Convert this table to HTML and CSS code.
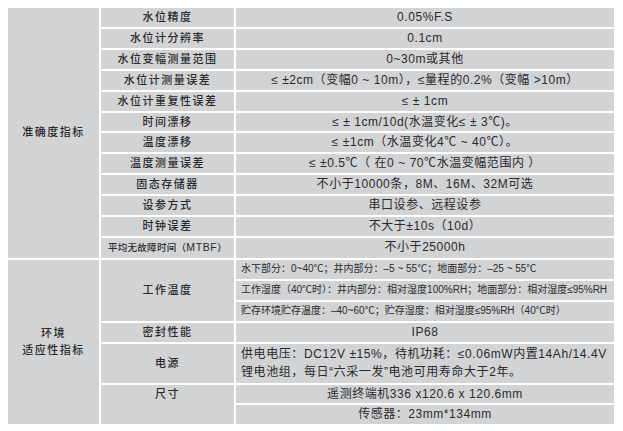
FILE: index.html
```html
<!DOCTYPE html>
<html lang="zh">
<head>
<meta charset="utf-8">
<title>技术参数</title>
<link rel="stylesheet" href="styles.css">
</head>
<body>
<table class="spec">
  <colgroup>
    <col class="c1">
    <col class="c2">
    <col class="c3">
  </colgroup>
  <tbody>
    <tr><td class="group" rowspan="12">准确度指标</td><td class="label">水位精度</td><td class="val">0.05%F.S</td></tr>
    <tr><td class="label">水位计分辨率</td><td class="val">0.1cm</td></tr>
    <tr><td class="label">水位变幅测量范围</td><td class="val">0~30m或其他</td></tr>
    <tr><td class="label">水位计测量误差</td><td class="val">≤ ±2cm（变幅0 ~ 10m），≤量程的0.2%（变幅 &gt;10m）</td></tr>
    <tr><td class="label">水位计重复性误差</td><td class="val">≤ ± 1cm</td></tr>
    <tr><td class="label">时间漂移</td><td class="val">≤ ± 1cm/10d(水温变化≤ ± 3℃)。</td></tr>
    <tr><td class="label">温度漂移</td><td class="val">≤ ±1cm（水温变化4℃ ~ 40℃）。</td></tr>
    <tr><td class="label">温度测量误差</td><td class="val">≤ ±0.5℃（ 在0 ~ 70℃水温变幅范围内 ）</td></tr>
    <tr><td class="label">固态存储器</td><td class="val">不小于10000条，8M、16M、32M可选</td></tr>
    <tr><td class="label">设参方式</td><td class="val">串口设参、远程设参</td></tr>
    <tr><td class="label">时钟误差</td><td class="val">不大于±10s（10d）</td></tr>
    <tr><td class="label label-sm">平均无故障时间（<span class="abbr">MTBF</span>）</td><td class="val">不小于25000h</td></tr>

    <tr><td class="group" rowspan="7">环境<br>适应性指标</td><td class="label" rowspan="3">工作温度</td><td class="val val-sm">水下部分：0~40℃；井内部分：–5 ~ 55℃；地面部分：–25 ~ 55℃</td></tr>
    <tr><td class="val val-sm">工作湿度（40℃时）：井内部分：相对湿度100%RH；地面部分：相对湿度≤95%RH</td></tr>
    <tr><td class="val val-sm">贮存环境贮存温度：–40~60℃；贮存湿度：相对湿度≤95%RH（40℃时）</td></tr>
    <tr><td class="label">密封性能</td><td class="val">IP68</td></tr>
    <tr class="tall"><td class="label">电源</td><td class="val val-left">供电电压：DC12V ±15%，待机功耗：≤0.06mW内置14Ah/14.4V<br>锂电池组，每日“六采一发”电池可用寿命大于2年。</td></tr>
    <tr><td class="label label-top" rowspan="2">尺寸</td><td class="val">遥测终端机336 x120.6 x 120.6mm</td></tr>
    <tr><td class="val">传感器：23mm*134mm</td></tr>
  </tbody>
</table>
</body>
</html>
```
FILE: styles.css
```css
html, body {
  margin: 0;
  padding: 0;
  background: #ffffff;
}

.spec {
  margin: 6px 0 0 6px;
  width: 610px;
  table-layout: fixed;
  border-collapse: separate;
  border-spacing: 2px;
  font-family: "Liberation Sans", "Noto Sans CJK SC", sans-serif;
  color: #2a2a2a;
}

.c1 { width: 91px; }
.c2 { width: 133px; }
.c3 { width: 378px; }

.spec td {
  background: #d2d3d5;
  padding: 0;
  height: 18.9px;
  line-height: 18.9px;
  text-align: center;
  vertical-align: middle;
  white-space: nowrap;
  overflow: hidden;
}

.group {
  font-size: 11px;
  letter-spacing: 1.5px;
  line-height: 17px !important;
  font-weight: 500;
}

.label {
  font-size: 11px;
  letter-spacing: 1.5px;
  font-weight: 500;
}

.label-sm {
  font-size: 9.5px;
  letter-spacing: 0.3px;
}

.abbr {
  font-size: 10.5px;
  letter-spacing: 0.6px;
}

.label-top {
  vertical-align: top !important;
}

.val {
  font-size: 12px;
  letter-spacing: 0.55px;
}

.val-sm {
  font-size: 10px;
  letter-spacing: 0;
  text-align: left !important;
  padding-left: 5px !important;
}

.tall td {
  height: 39px;
}

.val-left {
  text-align: left !important;
  padding-left: 5px !important;
  line-height: 18px !important;
  letter-spacing: 0.58px;
}
```
